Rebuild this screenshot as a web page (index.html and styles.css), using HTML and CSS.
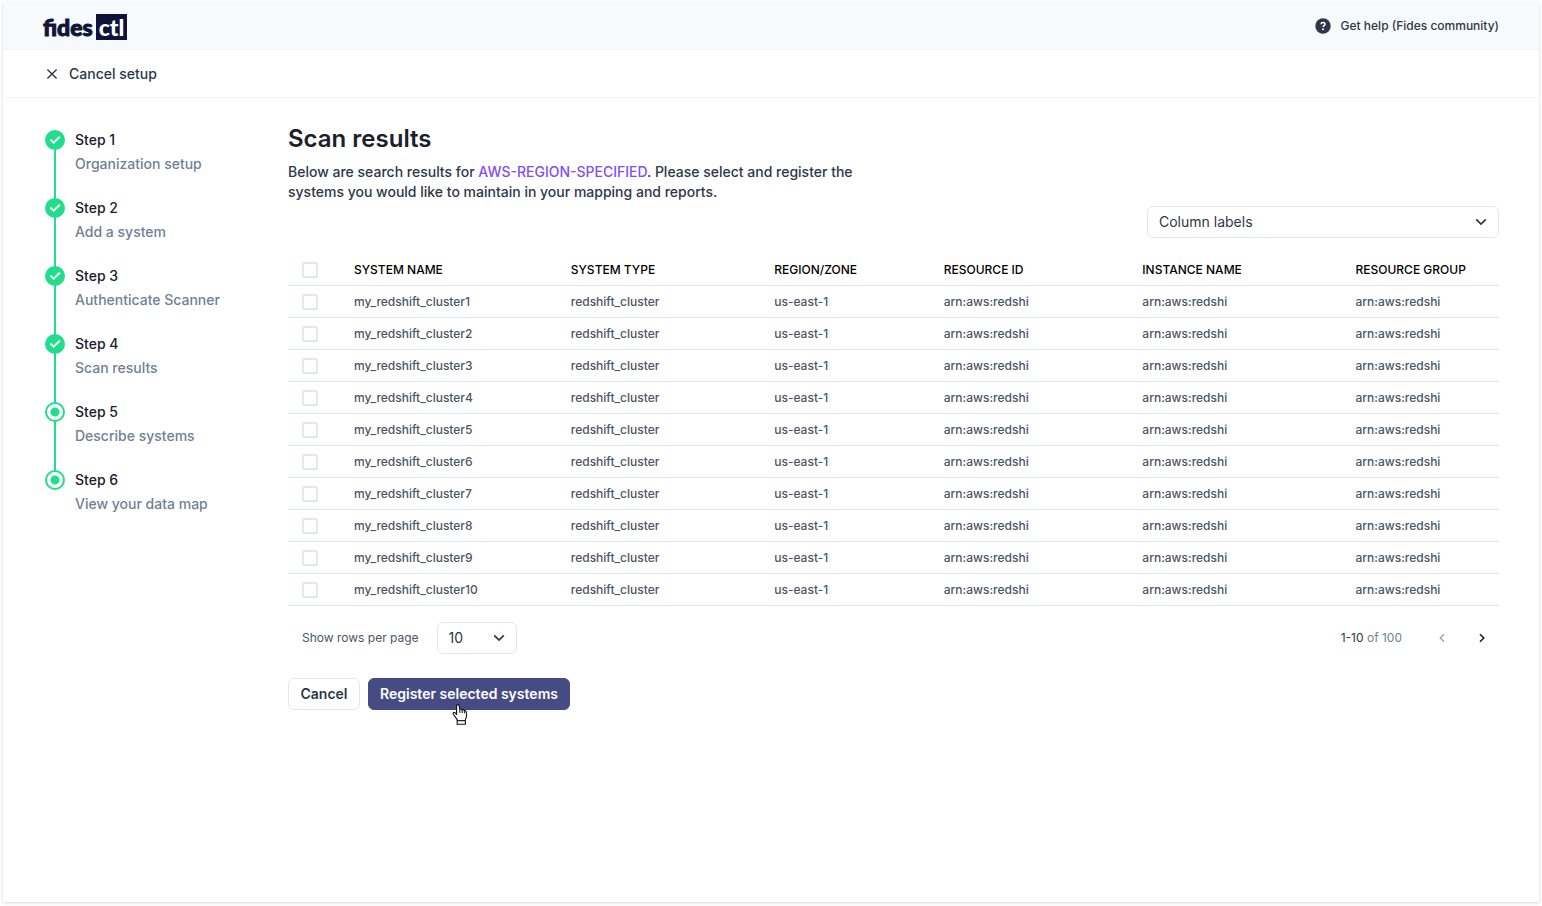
FILE: index.html
```html
<!DOCTYPE html>
<html lang="en">
<head>
<meta charset="utf-8">
<title>Scan results</title>
<link rel="stylesheet" href="styles.css">
</head>
<body>
<div class="page">
  <header class="topbar">
    <a class="logo" href="#"><span class="logo-name">fides</span><span class="logo-box">ctl</span></a>
    <a class="help" href="#">
      <svg width="16" height="16" viewBox="0 0 16 16" aria-hidden="true"><circle cx="8" cy="8" r="7.7" fill="#2d3748"/><path d="M6 6.3C6.1 5.1 6.9 4.5 8 4.5c1.2 0 2 .7 2 1.7 0 1.4-1.9 1.4-1.9 2.9" fill="none" stroke="#fff" stroke-width="1.5"/><circle cx="8" cy="11.2" r=".95" fill="#fff"/></svg>
      Get help (Fides community)
    </a>
  </header>
  <nav class="subbar">
    <a class="cancel-setup" href="#">
      <svg width="16" height="16" viewBox="0 0 16 16" aria-hidden="true"><path d="M3.4 3.4l9.2 9.2M12.6 3.4l-9.2 9.2" stroke="#2d3748" stroke-width="1.4"/></svg>
      Cancel setup
    </a>
  </nav>
  <div class="body">
    <ol class="steps">
      <li class="step"><span class="marker done"><svg width="20" height="20" viewBox="0 0 20 20"><path d="M5.4 9.600l3.200 3.100 6.200-6" fill="none" stroke="#fff" stroke-width="2"/></svg></span><div><div class="step-title">Step 1</div><div class="step-text">Organization setup</div></div></li>
      <li class="step"><span class="marker done"><svg width="20" height="20" viewBox="0 0 20 20"><path d="M5.4 9.600l3.200 3.100 6.200-6" fill="none" stroke="#fff" stroke-width="2"/></svg></span><div><div class="step-title">Step 2</div><div class="step-text">Add a system</div></div></li>
      <li class="step"><span class="marker done"><svg width="20" height="20" viewBox="0 0 20 20"><path d="M5.4 9.600l3.200 3.100 6.200-6" fill="none" stroke="#fff" stroke-width="2"/></svg></span><div><div class="step-title">Step 3</div><div class="step-text">Authenticate Scanner</div></div></li>
      <li class="step"><span class="marker done"><svg width="20" height="20" viewBox="0 0 20 20"><path d="M5.4 9.600l3.200 3.100 6.200-6" fill="none" stroke="#fff" stroke-width="2"/></svg></span><div><div class="step-title">Step 4</div><div class="step-text">Scan results</div></div></li>
      <li class="step"><span class="marker open"></span><div><div class="step-title">Step 5</div><div class="step-text">Describe systems</div></div></li>
      <li class="step"><span class="marker open"></span><div><div class="step-title">Step 6</div><div class="step-text">View your data map</div></div></li>
    </ol>
    <main class="main">
      <h1>Scan results</h1>
      <p class="intro">Below are search results for <a href="#">AWS-REGION-SPECIFIED</a>. Please select and register the systems you would like to maintain in your mapping and reports.</p>
      <div class="select labels">
        <select aria-label="Column labels"><option>Column labels</option></select>
        <svg width="12" height="8" viewBox="0 0 12 8" aria-hidden="true"><path d="M1.2 1.3L6 6.1l4.8-4.8" fill="none" stroke="#2d3748" stroke-width="1.7"/></svg>
      </div>
      <table>
        <colgroup><col class="c-check"><col class="c-name"><col class="c-type"><col class="c-region"><col class="c-id"><col class="c-instance"><col></colgroup>
        <thead><tr><th><input type="checkbox" aria-label="Select all systems"></th><th>SYSTEM NAME</th><th>SYSTEM TYPE</th><th>REGION/ZONE</th><th>RESOURCE ID</th><th>INSTANCE NAME</th><th>RESOURCE GROUP</th></tr></thead>
        <tbody>
          <tr><td><input type="checkbox" aria-label="Select my_redshift_cluster1"></td><td>my_redshift_cluster1</td><td>redshift_cluster</td><td>us-east-1</td><td>arn:aws:redshi</td><td>arn:aws:redshi</td><td>arn:aws:redshi</td></tr>
          <tr><td><input type="checkbox" aria-label="Select my_redshift_cluster2"></td><td>my_redshift_cluster2</td><td>redshift_cluster</td><td>us-east-1</td><td>arn:aws:redshi</td><td>arn:aws:redshi</td><td>arn:aws:redshi</td></tr>
          <tr><td><input type="checkbox" aria-label="Select my_redshift_cluster3"></td><td>my_redshift_cluster3</td><td>redshift_cluster</td><td>us-east-1</td><td>arn:aws:redshi</td><td>arn:aws:redshi</td><td>arn:aws:redshi</td></tr>
          <tr><td><input type="checkbox" aria-label="Select my_redshift_cluster4"></td><td>my_redshift_cluster4</td><td>redshift_cluster</td><td>us-east-1</td><td>arn:aws:redshi</td><td>arn:aws:redshi</td><td>arn:aws:redshi</td></tr>
          <tr><td><input type="checkbox" aria-label="Select my_redshift_cluster5"></td><td>my_redshift_cluster5</td><td>redshift_cluster</td><td>us-east-1</td><td>arn:aws:redshi</td><td>arn:aws:redshi</td><td>arn:aws:redshi</td></tr>
          <tr><td><input type="checkbox" aria-label="Select my_redshift_cluster6"></td><td>my_redshift_cluster6</td><td>redshift_cluster</td><td>us-east-1</td><td>arn:aws:redshi</td><td>arn:aws:redshi</td><td>arn:aws:redshi</td></tr>
          <tr><td><input type="checkbox" aria-label="Select my_redshift_cluster7"></td><td>my_redshift_cluster7</td><td>redshift_cluster</td><td>us-east-1</td><td>arn:aws:redshi</td><td>arn:aws:redshi</td><td>arn:aws:redshi</td></tr>
          <tr><td><input type="checkbox" aria-label="Select my_redshift_cluster8"></td><td>my_redshift_cluster8</td><td>redshift_cluster</td><td>us-east-1</td><td>arn:aws:redshi</td><td>arn:aws:redshi</td><td>arn:aws:redshi</td></tr>
          <tr><td><input type="checkbox" aria-label="Select my_redshift_cluster9"></td><td>my_redshift_cluster9</td><td>redshift_cluster</td><td>us-east-1</td><td>arn:aws:redshi</td><td>arn:aws:redshi</td><td>arn:aws:redshi</td></tr>
          <tr><td><input type="checkbox" aria-label="Select my_redshift_cluster10"></td><td>my_redshift_cluster10</td><td>redshift_cluster</td><td>us-east-1</td><td>arn:aws:redshi</td><td>arn:aws:redshi</td><td>arn:aws:redshi</td></tr>
        </tbody>
      </table>
      <div class="pager">
        <label for="rows">Show rows per page</label>
        <div class="select rows">
          <select id="rows"><option>10</option></select>
          <svg width="12" height="8" viewBox="0 0 12 8" aria-hidden="true"><path d="M1.2 1.3L6 6.1l4.8-4.8" fill="none" stroke="#2d3748" stroke-width="1.7"/></svg>
        </div>
        <div class="range"><span class="range-now">1-10</span> of 100</div>
        <button class="arrow" type="button" aria-label="Previous page" disabled><svg width="8" height="10" viewBox="0 0 8 10"><path d="M6 1.2L2.2 5 6 8.8" fill="none" stroke="#a0a6b0" stroke-width="1.4"/></svg></button>
        <button class="arrow" type="button" aria-label="Next page"><svg width="8" height="10" viewBox="0 0 8 10"><path d="M2 1.2L5.800 5 2 8.800" fill="none" stroke="#1a202c" stroke-width="1.6"/></svg></button>
      </div>
      <div class="actions">
        <button class="btn" type="button">Cancel</button>
        <div class="hovered">
          <button class="btn primary" type="button">Register selected systems</button>
          <svg class="cursor" width="16" height="24" viewBox="0 0 16 24" aria-hidden="true"><path d="M4.600 11.500V3C4.600 1.200 7 1.200 7.200 3l.5 3.500c.3-1 2.100-.8 2.300.5.500-.9 2.100-.5 2.300.8.700-.7 1.900 0 2 1.200l.2 3.500c.1 2-1.100 3.300-1.300 5.300H5.600C5 15.500 2.600 13.500 1.200 11c-.6-1.300.9-2.100 1.900-1.200z" fill="#fff" stroke="#111" stroke-width="1.1" stroke-linejoin="round"/><path d="M7.700 6.500l.3 3.500M10 7l.3 3M12.300 7.800l.2 2.500" stroke="#111" stroke-width="1"/><path d="M5.200 17.800h8.200v3.400H5.200z" fill="#fff" stroke="#111" stroke-width="1.1"/></svg>
        </div>
      </div>
    </main>
  </div>
</div>
</body>
</html>
```
FILE: styles.css
```css
* { box-sizing: border-box; }
body {
  margin: 0;
  padding: 2px 3px 4px;
  min-height: 100vh;
  display: flex;
  background: #fff;
  color: #2d3748;
  font: 500 14px/20px Inter, "Liberation Sans", sans-serif;
}
a { color: inherit; text-decoration: none; }
svg { display: block; flex: none; }
button, select { font: inherit; color: inherit; }

.page { flex: 1; background: #fff; box-shadow: 0 1px 3px rgba(0, 0, 0, .16); }

.topbar {
  height: 48px;
  padding: 0 40px;
  display: flex;
  align-items: center;
  justify-content: space-between;
  background: #f7fafc;
  border-bottom: 1px solid #edf2f7;
}
.logo {
  display: flex;
  align-items: center;
  gap: 3px;
  margin-top: 2px;
  color: #111439;
  font: 900 23px/26px Lato, sans-serif;
}
.logo-name { -webkit-text-stroke: 1px #111439; }
.logo-box { padding: 0 3px; background: #111439; color: #fff; }
.help { display: flex; align-items: center; gap: 10px; font-size: 12px; }

.subbar {
  height: 48px;
  padding: 0 41px;
  display: flex;
  align-items: center;
  border-bottom: 1px solid #f4f7fa;
}
.cancel-setup { display: flex; align-items: center; gap: 9px; }

.body { display: flex; }
.steps {
  flex: none;
  width: 243px;
  margin: 0;
  padding: 30px 0 0;
  list-style: none;
}
.step { display: flex; gap: 10px; height: 68px; padding-left: 42px; color: #1a202c; line-height: 24px; }
.step:not(:last-child) { background: linear-gradient(#22dd8c, #22dd8c) 51px 12px / 2px 100% no-repeat; }
.step:not(:first-child) { background-position-y: 0; }
.step-text { color: #718096; }
.marker { flex: none; width: 20px; height: 20px; margin-top: 2px; border-radius: 50%; }
.done { background: #22dd8c; }
.open { border: 2px solid #22dd8c; background: radial-gradient(circle, #22dd8c 4px, #fff 5px); }
.step:last-child { background: linear-gradient(#22dd8c, #22dd8c) 51px 0 / 2px 4px no-repeat; }

.main { flex: 1; padding: 25px 40px 40px 42px; display: flex; flex-direction: column; }
h1 { margin: 0 0 7px; color: #1a202c; font-size: 24px; line-height: 32px; font-weight: 600; }
.intro { margin: 0 0 4px; max-width: 600px; }
.intro a { color: #824ef2; }

.select { display: grid; align-items: center; }
.select > * { grid-area: 1 / 1; }
.select svg { justify-self: end; margin-right: 12px; pointer-events: none; }
.select select {
  appearance: none;
  width: 100%;
  height: 32px;
  padding: 0 11px;
  border: 1px solid #e2e8f0;
  border-radius: 6px;
  background: #fff;
  font-weight: 400;
}
.labels { width: 352px; align-self: flex-end; margin-bottom: 16px; }
.rows { width: 80px; }

table { width: 100%; table-layout: fixed; border-collapse: separate; border-spacing: 0; font-size: 12px; line-height: 16px; }
.c-check { width: 66px; }
.c-name { width: 17.9%; }
.c-type { width: 16.8%; }
.c-region { width: 14%; }
.c-id { width: 16.4%; }
.c-instance { width: 17.6%; }
th, td { height: 32px; padding: 0; text-align: left; border-bottom: 1px solid #e2e8f0; font-weight: 500; }
th { color: #000; }
td { color: #4a5568; }
th:first-child, td:first-child { padding-left: 14px; }
input[type="checkbox"] {
  appearance: none;
  display: block;
  width: 16px;
  height: 16px;
  margin: 0;
  border: 2px solid #e2e8f0;
  border-radius: 2px;
  background: #fff;
}

.pager { display: flex; align-items: center; padding: 16px 7px 24px 14px; font-size: 12px; font-weight: 400; color: #4a5568; }
.rows select { font-size: 14px; color: #2d3748; }
.pager label { margin-right: 18px; }
.range { margin: 0 30px 0 auto; color: #718096; }
.range-now { color: #2d3748; }
.arrow { width: 20px; height: 20px; padding: 0; display: grid; place-items: center; border: 0; background: none; }
.arrow + .arrow { margin-left: 20px; }

.actions { display: flex; gap: 8px; }
.btn { min-width: 72px; height: 32px; padding: 0 11px; border: 1px solid #e2e8f0; border-radius: 6px; background: #fff; font-weight: 600; }
.primary { border-color: #464b83; background: #464b83; color: #fff; }
.hovered { position: relative; }
.cursor { position: absolute; left: 84px; top: 25px; }
```
